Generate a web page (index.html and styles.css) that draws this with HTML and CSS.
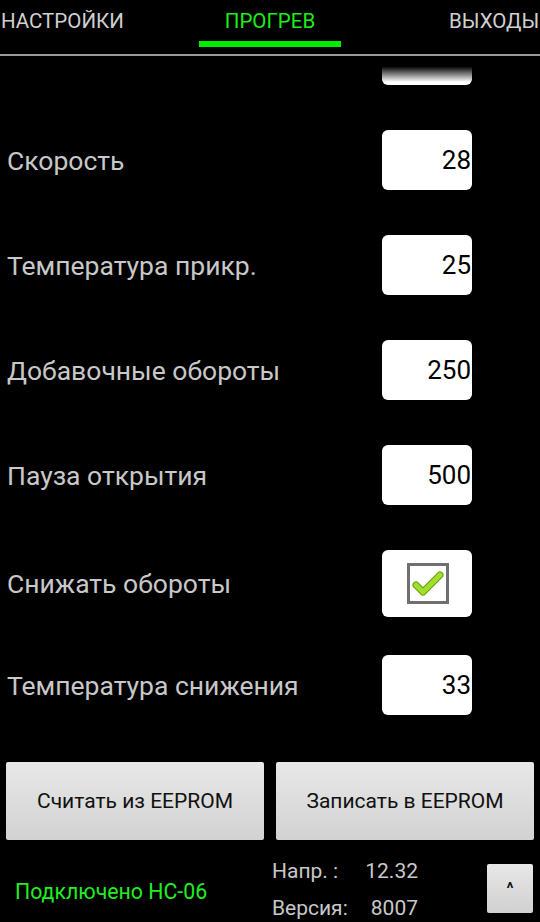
FILE: index.html
```html
<!DOCTYPE html>
<html lang="ru">
<head>
  <meta charset="UTF-8">
  <meta name="viewport" content="width=device-width, initial-scale=1.0">
  <title>Прогрев</title>
  <link rel="stylesheet" href="styles.css">
</head>
<body>
  <div class="screen">
    <!-- Tabs -->
    <div class="tabs">
      <div class="tab tab-left">НАСТРОЙКИ</div>
      <div class="tab tab-active">
        <span>ПРОГРЕВ</span>
        <div class="tab-bar"></div>
      </div>
      <div class="tab tab-right">ВЫХОДЫ</div>
    </div>

    <!-- Settings list -->
    <div class="content">
      <div class="list">
        <div class="row">
          <div class="label"></div>
          <div class="field"></div>
        </div>
        <div class="row">
          <div class="label">Скорость</div>
          <div class="field">28</div>
        </div>
        <div class="row">
          <div class="label">Температура прикр.</div>
          <div class="field">25</div>
        </div>
        <div class="row">
          <div class="label">Добавочные обороты</div>
          <div class="field">250</div>
        </div>
        <div class="row">
          <div class="label">Пауза открытия</div>
          <div class="field">500</div>
        </div>
        <div class="row">
          <div class="label label-tall">Снижать обороты</div>
          <div class="field field-check">
            <span class="checkbox">
              <svg width="36" height="35" viewBox="0 0 36 35">
                <path d="M6 19 L13 26 L30 9" fill="none" stroke="#6a9a10" stroke-width="7" stroke-linecap="round" stroke-linejoin="round"/>
                <path d="M6 19 L13 26 L30 9" fill="none" stroke="#9ee02a" stroke-width="5" stroke-linecap="round" stroke-linejoin="round"/>
              </svg>
            </span>
          </div>
        </div>
        <div class="row">
          <div class="label">Температура снижения</div>
          <div class="field">33</div>
        </div>
      </div>
    </div>

    <!-- EEPROM buttons -->
    <div class="buttons">
      <button class="btn">Считать из EEPROM</button>
      <button class="btn">Записать в EEPROM</button>
    </div>

    <!-- Footer -->
    <div class="footer">
      <div class="status">Подключено HC-06</div>
      <div class="info">
        <span>Напр. :</span><span class="value">12.32</span>
        <span>Версия:</span><span class="value">8007</span>
      </div>
      <button class="btn-up">^</button>
    </div>
  </div>
</body>
</html>
```

FILE: styles.css
```css
/* General Reset */
* {
  box-sizing: border-box;
  margin: 0;
  padding: 0;
}
body {
  background-color: #000;
  font-family: Roboto, "Liberation Sans", sans-serif;
  color: #c8c8c8;
}
.screen {
  width: 540px;
  height: 922px;
  overflow: hidden;
}
/* Tabs */
.tabs {
  display: flex;
  height: 56px;
  border-bottom: 2px solid #999;
  overflow: hidden;
  white-space: nowrap;
}
.tab {
  font-size: 20.5px;
  line-height: 24px;
  padding-top: 9px;
  color: #d0d0d0;
}
.tab-left {
  width: 199px;
  padding-left: 1px;
}
.tab-active {
  width: 142px;
  text-align: center;
  color: #19f019;
}
.tab-bar {
  height: 6px;
  margin-top: 8px;
  background-color: #00ee00;
}
.tab-right {
  padding-left: 108px;
}
/* Scrolling list */
.content {
  position: relative;
  height: 694px;
  overflow: hidden;
}
.content::before {
  content: "";
  position: absolute;
  left: 0;
  right: 0;
  top: 0;
  height: 26px;
  background: linear-gradient(#000 40%, rgba(0, 0, 0, 0));
  z-index: 1;
}
.list {
  margin-top: -31px;
}
.row {
  display: flex;
  align-items: flex-start;
  height: 105px;
  padding-left: 7px;
  padding-right: 68px;
}
.label {
  flex: 1;
  height: 60px;
  display: flex;
  align-items: center;
  font-size: 26.5px;
  color: #c8c8c8;
}
.label-tall {
  height: 67px;
}
.field {
  width: 90px;
  height: 60px;
  background-color: #fff;
  border-radius: 6px;
  color: #000;
  font-size: 26px;
  line-height: 60px;
  text-align: right;
  padding-right: 1px;
}
.field-check {
  height: 67px;
  display: flex;
  align-items: center;
  justify-content: center;
  padding-right: 0;
  padding-left: 2px;
}
.checkbox {
  width: 42px;
  height: 41px;
  border: 3px solid #707070;
  display: flex;
  align-items: center;
  justify-content: center;
}
/* Buttons */
.buttons {
  display: flex;
  gap: 12px;
  padding: 12px 6px 0;
  height: 90px;
}
.btn {
  flex: 1;
  border: none;
  border-radius: 2px;
  background: linear-gradient(#e8e8e8, #d2d2d2);
  font-family: Roboto, "Liberation Sans", sans-serif;
  font-size: 21px;
  color: #111;
}
/* Footer */
.footer {
  display: flex;
  align-items: flex-start;
  padding-left: 15px;
}
.status {
  width: 257px;
  margin-top: 39px;
  font-size: 21.3px;
  line-height: 26px;
  color: #22ee22;
}
.info {
  display: grid;
  grid-template-columns: 90px 56px;
  padding-top: 13px;
  font-size: 21px;
  line-height: 37px;
  color: #c8c8c8;
}
.value {
  text-align: right;
}
.btn-up {
  width: 46px;
  height: 49px;
  margin-top: 24px;
  margin-left: auto;
  margin-right: 7px;
  border: none;
  border-radius: 2px;
  background: linear-gradient(#e8e8e8, #d0d0d0);
  font-family: Roboto, "Liberation Sans", sans-serif;
  font-size: 16px;
  font-weight: bold;
  color: #111;
}
```
